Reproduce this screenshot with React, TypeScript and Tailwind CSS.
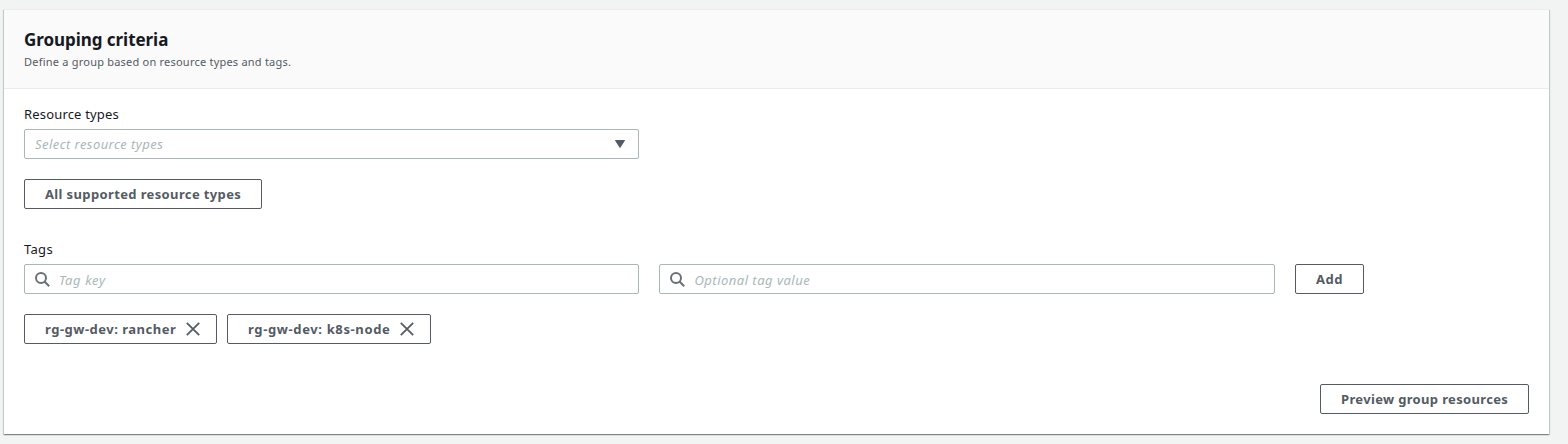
import type { ReactNode } from "react";

function Button({ children, className = "" }: { children: ReactNode; className?: string }) {
  return (
    <button
      type="button"
      className={`flex h-[30px] items-center whitespace-nowrap rounded-[2px] border border-[#545b64] bg-white pl-5 text-[13px] font-bold leading-5 text-[#545b64] ${className}`}
    >
      {children}
    </button>
  );
}

function SearchIcon() {
  return (
    <svg className="mt-[2px] size-4 shrink-0" viewBox="0 0 16 16" fill="none" stroke="#687078" strokeWidth="2">
      <circle cx="6" cy="6" r="5" />
      <path d="M9.5 9.5l4.7 4.7" />
    </svg>
  );
}

function CloseIcon() {
  return (
    <svg className="ml-[10px] size-[14px] shrink-0" viewBox="0 0 14 14" fill="none" stroke="#545b64" strokeWidth="1.8">
      <path d="M.8.8l12.4 12.4M13.2.8L.8 13.2" />
    </svg>
  );
}

function SearchField({ children, className }: { children: ReactNode; className: string }) {
  return (
    <div className={`flex h-[30px] items-center rounded-[2px] border border-[#aab7b8] bg-white pl-[10px] ${className}`}>
      <SearchIcon />
      {children}
    </div>
  );
}

export default function App() {
  return (
    <div className="h-[444px] w-full overflow-hidden bg-[#f2f3f3] pl-1 pr-[19px] pt-[9px] font-['Noto_Sans',sans-serif] text-[13px] leading-5 text-[#16191f]">
      <section className="h-[425px] border-t border-[#eaeded] bg-white shadow-[0_1px_1px_0_rgba(0,28,36,0.3),1px_1px_1px_0_rgba(0,28,36,0.15),-1px_1px_1px_0_rgba(0,28,36,0.15)]">
        <header className="h-[79px] border-b border-[#eaeded] bg-[#fafafa] px-5 pt-[19px]">
          <h2 className="text-[17px] font-bold leading-[22px] tracking-[-0.05px]">Grouping criteria</h2>
          <p className="mt-px text-[11px] leading-5 tracking-[0.22px] text-[#545b64]">Define a group based on resource types and tags.</p>
        </header>
        <div className="px-5 pt-[15px]">
          <div className="tracking-[0.17px]">Resource types</div>
          <div className="mt-[5px] flex h-[30px] w-[615px] items-center justify-between rounded-[2px] border border-[#aab7b8] pl-[10px] pr-[13px]">
            <span className="italic tracking-[0.44px] text-[#aab7b8]">Select resource types</span>
            <svg className="h-2 w-[10px]" viewBox="0 0 10 8" fill="#545b64" stroke="#545b64" strokeLinejoin="round">
              <path d="M.5.5h9L5 7.5z" />
            </svg>
          </div>
          <Button className="mt-5 w-[238px] tracking-[0.37px]">All supported resource types</Button>
          <div className="mt-[30px] tracking-[0.3px]">Tags</div>
          <div className="mt-[5px] flex">
            <SearchField className="w-[615px]">
              <span className="ml-2 mt-[2px] italic tracking-[0.62px] text-[#aab7b8]">Tag key</span>
            </SearchField>
            <SearchField className="ml-5 w-[616px]">
              <span className="ml-[8.5px] mt-[2px] italic tracking-[0.48px] text-[#aab7b8]">Optional tag value</span>
            </SearchField>
            <Button className="ml-5 w-[69px] tracking-[0.5px]">Add</Button>
          </div>
          <div className="mt-5 flex gap-[10px]">
            <Button className="w-[193px]">
              <span className="w-[131px] text-left tracking-[0.5px]">rg-gw-dev: rancher</span>
              <CloseIcon />
            </Button>
            <Button className="w-[204px]">
              <span className="w-[142px] text-left tracking-[0.63px]">rg-gw-dev: k8s-node</span>
              <CloseIcon />
            </Button>
          </div>
          <div className="mt-10 flex justify-end">
            <Button className="w-[209px] tracking-[0.34px]">Preview group resources</Button>
          </div>
        </div>
      </section>
    </div>
  );
}
